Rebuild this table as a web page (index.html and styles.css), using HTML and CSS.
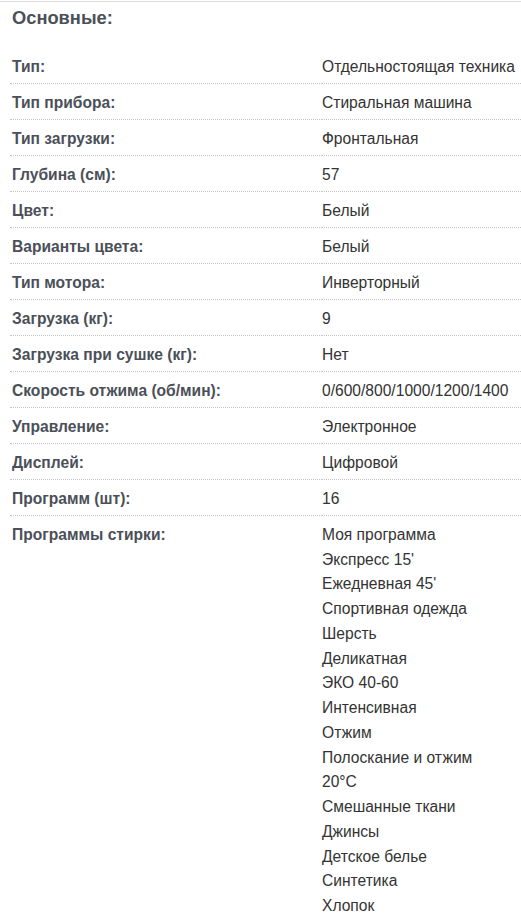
FILE: index.html
```html
<!DOCTYPE html>
<html lang="ru">
<head>
<meta charset="utf-8">
<link rel="stylesheet" href="styles.css">
</head>
<body>
<div class="specs">
  <h3 class="specs-title">Основные:</h3>
  <table class="specs-table">
    <tr><td class="label">Тип:</td><td class="value">Отдельностоящая техника</td></tr>
    <tr><td class="label">Тип прибора:</td><td class="value">Стиральная машина</td></tr>
    <tr><td class="label">Тип загрузки:</td><td class="value">Фронтальная</td></tr>
    <tr><td class="label">Глубина (см):</td><td class="value">57</td></tr>
    <tr><td class="label">Цвет:</td><td class="value">Белый</td></tr>
    <tr><td class="label">Варианты цвета:</td><td class="value">Белый</td></tr>
    <tr><td class="label">Тип мотора:</td><td class="value">Инверторный</td></tr>
    <tr><td class="label">Загрузка (кг):</td><td class="value">9</td></tr>
    <tr><td class="label">Загрузка при сушке (кг):</td><td class="value">Нет</td></tr>
    <tr><td class="label">Скорость отжима (об/мин):</td><td class="value">0/600/800/1000/1200/1400</td></tr>
    <tr><td class="label">Управление:</td><td class="value">Электронное</td></tr>
    <tr><td class="label">Дисплей:</td><td class="value">Цифровой</td></tr>
    <tr><td class="label">Программ (шт):</td><td class="value">16</td></tr>
    <tr class="multi">
      <td class="label">Программы стирки:</td>
      <td class="value">
        <div>Моя программа</div>
        <div>Экспресс 15'</div>
        <div>Ежедневная 45'</div>
        <div>Спортивная одежда</div>
        <div>Шерсть</div>
        <div>Деликатная</div>
        <div>ЭКО 40-60</div>
        <div>Интенсивная</div>
        <div>Отжим</div>
        <div>Полоскание и отжим</div>
        <div>20°C</div>
        <div>Смешанные ткани</div>
        <div>Джинсы</div>
        <div>Детское белье</div>
        <div>Синтетика</div>
        <div>Хлопок</div>
      </td>
    </tr>
  </table>
</div>
</body>
</html>
```

FILE: styles.css
```css
html, body {
  margin: 0;
  padding: 0;
  background: #fff;
}
body {
  font-family: "Liberation Sans", Arial, sans-serif;
  font-size: 15.6px;
  color: #333;
}
.specs {
  margin-top: 1px;
  border-top: 1px solid #dcdcdc;
}
.specs-title {
  margin: 0;
  padding: 6px 12px 0;
  height: 40px;
  font-size: 18.3px;
  font-weight: bold;
  line-height: 20px;
  color: #4b5058;
}
.specs-table {
  margin-left: 10px;
  width: 511px;
  border-collapse: collapse;
}
.specs-table td {
  height: 33px;
  padding: 2px 0 0;
  vertical-align: middle;
  white-space: nowrap;
  border-bottom: 1px dotted #c4c4c4;
}
.specs-table tr.multi td {
  border-bottom: none;
  vertical-align: top;
  padding-top: 7px;
  line-height: 24.73px;
}
.label {
  width: 310px;
  padding-left: 2px !important;
  font-weight: bold;
  color: #4b5058;
}
.value {
  color: #333;
}
```
